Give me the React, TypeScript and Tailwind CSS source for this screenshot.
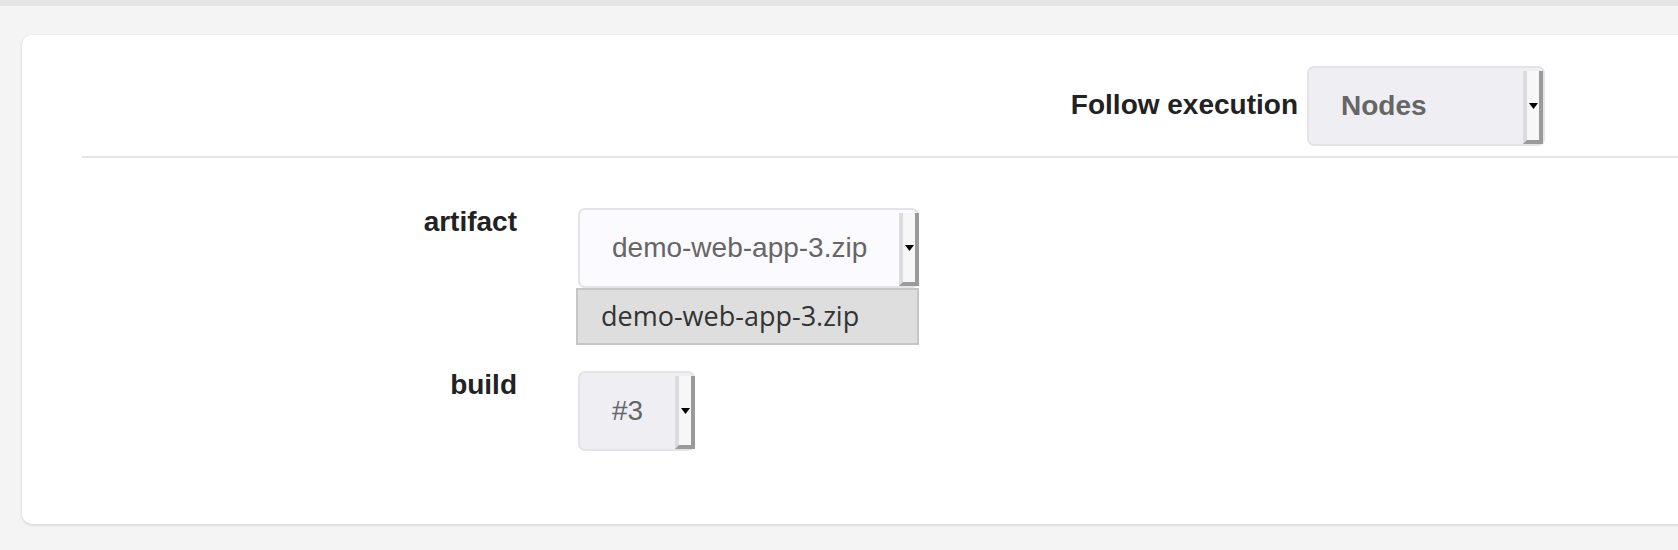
import React from 'react';

const Arrow = () => (
    <svg width="9" height="6" viewBox="0 0 9 6" className="block">
        <polygon points="0,0 9,0 4.5,6" fill="#000" />
    </svg>
);

// native-looking spinner strip on the right side of a select
const SpinStrip = () => (
    <div className="mt-[3px] w-[20px] shrink-0 bg-[#f7f7f7] border-l-[4px] border-l-[#dcdcdc] border-r-[4px] border-r-[#9a9a9a] border-b-[4px] border-b-[#9a9a9a] flex items-center justify-center">
        <Arrow />
    </div>
);

interface SelectBoxProps {
    value: string;
    bold?: boolean;
    light?: boolean;
    className?: string;
}

const SelectBox: React.FC<SelectBoxProps> = ({ value, bold, light, className = '' }) => (
    <div
        className={`flex items-stretch h-[80px] border-2 border-[#e3e3e8] rounded-[7px] ${light ? 'bg-[#fafaff]' : 'bg-[#efeff3]'} ${className}`}
    >
        <div className={`flex-1 flex items-center pl-[32px] pr-[32px] text-[28px] text-[#666] whitespace-nowrap ${bold ? 'font-bold' : ''}`}>
            {value}
        </div>
        <SpinStrip />
    </div>
);

export default function App() {
    return (
        <div className="w-full h-[550px] overflow-hidden bg-[#f4f4f4] font-['Liberation_Sans',Arial,sans-serif]">
            <div className="h-[6px] bg-[#e5e5e5]" />
            <div className="ml-[22px] mt-[29px] w-[1720px] bg-white rounded-[10px] shadow-[0_1px_3px_rgba(0,0,0,0.16)] pt-[31px] pb-[73px] pl-[60px]">
                <div className="flex items-center justify-end pr-[197px]">
                    <span className="text-[28px] font-bold text-[#222] mr-[9px] mb-[2px]">Follow execution</span>
                    <SelectBox value="Nodes" bold className="w-[238px]" />
                </div>
                <div className="mt-[10px] h-[2px] bg-[#e4e4e4]" />

                <div className="mt-[50px] flex flex-col gap-[83px]">
                    <div className="flex items-start">
                        <div className="w-[435px] text-right text-[28px] leading-[28px] font-bold text-[#222]">artifact</div>
                        <div className="ml-[61px] relative">
                            <SelectBox value="demo-web-app-3.zip" light className="w-[341px]" />
                            <div className="absolute left-[-2px] top-[80px] w-[343px] h-[57px] bg-[#dedede] border-2 border-[#c6c6c6] flex items-center pl-[23px] text-[27px] text-[#333] font-['Open_Sans','Noto_Sans',sans-serif] whitespace-nowrap">
                                demo-web-app-3.zip
                            </div>
                        </div>
                    </div>
                    <div className="flex items-start">
                        <div className="w-[435px] text-right text-[28px] leading-[28px] font-bold text-[#222]">build</div>
                        <div className="ml-[61px]">
                            <SelectBox value="#3" className="w-[117px]" />
                        </div>
                    </div>
                </div>
            </div>
        </div>
    );
}
